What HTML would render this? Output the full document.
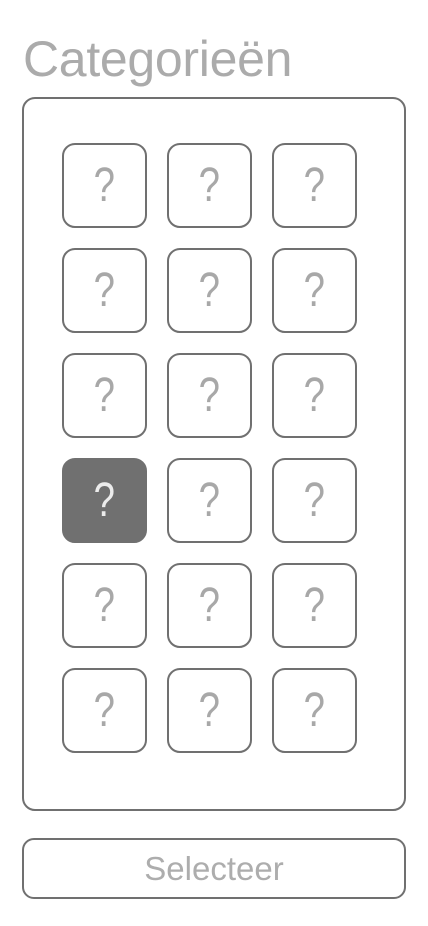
<!DOCTYPE html>
<html><head><style>
body{margin:0;width:428px;height:926px;background:#fff;font-family:"Liberation Sans",sans-serif;position:relative;overflow:hidden}
.t{position:absolute;left:23px;top:30px;font-size:50px;color:#ababab;font-weight:300;letter-spacing:-0.3px}
.box{position:absolute;left:22px;top:97px;width:380px;height:710px;border:2px solid #707070;border-radius:13px}
.tile{position:absolute;width:81px;height:81px;border:2px solid #707070;border-radius:13px;display:flex;align-items:center;justify-content:center;font-size:48px;color:#a8a8a8;box-sizing:content-box}
.tile span{transform:scaleX(0.8)}
.tile.on{background:#707070;color:#ececec}
.btn{position:absolute;left:22px;top:838px;width:380px;height:57px;border:2px solid #707070;border-radius:12px;text-align:center;line-height:57px;font-size:33px;color:#adadad}
</style></head><body>
<div class="t">Categorieën</div>
<div class="box"></div>
<div id="g"></div>
<div class="btn">Selecteer</div>
<script>
var g=document.getElementById('g'),xs=[62,167,272],ys=[143,248,353,458,563,668],h='';
ys.forEach(function(y,r){xs.forEach(function(x,c){h+='<div class="tile'+(r==3&&c==0?' on':'')+'" style="left:'+x+'px;top:'+y+'px"><span>?</span></div>';});});
g.innerHTML=h;
</script>
</body></html>
